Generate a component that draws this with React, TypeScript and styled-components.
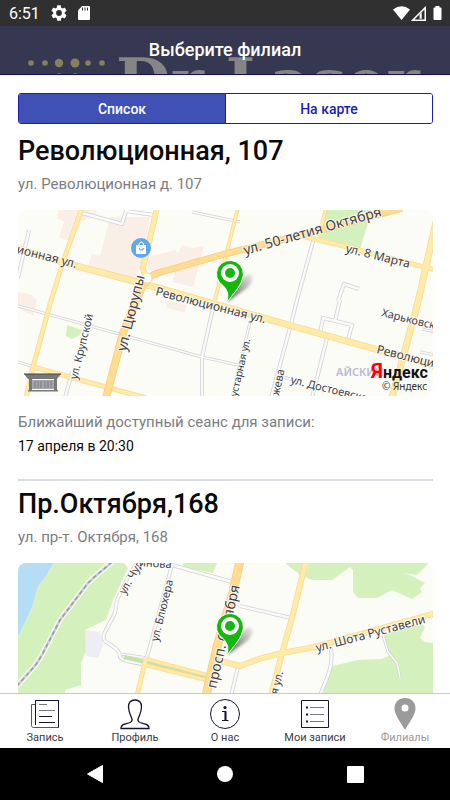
import React, { useState } from "react";
import styled, { createGlobalStyle } from "styled-components";

const GlobalStyle = createGlobalStyle`
  *, *::before, *::after { box-sizing: border-box; }
  body { margin: 0; background: #fff; }
  body, button { font-family: Roboto, "Liberation Sans", sans-serif; }
`;

const Screen = styled.div`
  display: flex;
  flex-direction: column;
  height: 100vh;
  background: #fff;
  color: #0a0a0a;
`;

const StatusBar = styled.div`
  flex: none;
  display: flex;
  align-items: center;
  justify-content: space-between;
  height: 26px;
  padding: 0 8px 0 9px;
  background: #303030;
  color: #fff;
  font-size: 16px;
`;

const StatusGroup = styled.div<{ $gap: number }>`
  display: flex;
  align-items: center;
  gap: ${(p) => p.$gap}px;
  svg { display: block; }
`;

const Header = styled.header`
  position: relative;
  flex: none;
  display: flex;
  align-items: center;
  justify-content: center;
  height: 49px;
  overflow: hidden;
  background: #353850;
  border-bottom: 1px solid #10106a;
`;

const HeaderArt = styled.svg`
  position: absolute;
  inset: 0;
  width: 100%;
  height: 49px;
`;

const Title = styled.h1`
  position: relative;
  margin: 0;
  color: #fff;
  font-size: 18px;
  line-height: 24px;
  font-weight: 500;
`;

const Main = styled.main`
  flex: 1;
  min-height: 0;
  overflow: hidden;
  padding: 18px 17px 0 18px;
`;

const Segments = styled.div`
  display: flex;
  height: 31px;
  margin-bottom: 4px;
  border: 1px solid #1a1fb0;
  border-radius: 3px;
  overflow: hidden;
`;

const Segment = styled.button<{ $active: boolean }>`
  flex: 1;
  border: 0;
  padding: 0;
  font-size: 14px;
  font-weight: 500;
  color: ${(p) => (p.$active ? "#fff" : "#1a1fb0")};
  background: ${(p) => (p.$active ? "#3f51b5" : "#fff")};
  & + & { border-left: 1px solid #1a1fb0; }
`;

const Branch = styled.article`
  & + & {
    margin-top: 21px;
    border-top: 2px solid #dadbe0;
  }
`;

const BranchName = styled.h2`
  margin: 0;
  padding-top: 8px;
  font-size: 27px;
  line-height: 30px;
  font-weight: 500;
  white-space: nowrap;
`;

const Muted = styled.p`
  margin: 0;
  color: #7c7c82;
  font-size: 15px;
  line-height: 20px;
`;

const Address = styled(Muted)`
  margin-top: 8px;
`;

const MapFrame = styled.svg`
  display: block;
  width: 100%;
  height: 186px;
  margin: 16px 0;
  border-radius: 8px;
  background: #fbfcf6;
  font-family: "Noto Sans", sans-serif;
`;

const SessionTime = styled.p`
  margin: 2px 0 0;
  font-size: 14px;
  line-height: 24px;
`;

const Tabs = styled.nav`
  flex: none;
  display: grid;
  grid-template-columns: repeat(5, 1fr);
  height: 55px;
  border-top: 1px solid #c9c9c9;
  background: #fff;
`;

const Tab = styled.button<{ $active: boolean }>`
  display: flex;
  flex-direction: column;
  align-items: center;
  gap: 1px;
  padding: 4px 0 0;
  border: 0;
  background: none;
  font-size: 11px;
  line-height: 14px;
  white-space: nowrap;
  color: ${(p) => (p.$active ? "#9a9a9a" : "#3c3c44")};
  svg { display: block; }
`;

const SystemNav = styled.div`
  flex: none;
  display: flex;
  justify-content: center;
  gap: 98px;
  height: 52px;
  background: #000;
`;

const SystemButton = styled.button`
  display: flex;
  align-items: center;
  justify-content: center;
  width: 32px;
  padding: 0;
  border: 0;
  background: none;
`;

type Label = { x: number; y: number; a: number; s: number; t: string };
type Road = { d: string; w: number; c: string; e: string };

const MapLabels = ({ items }: { items: Label[] }) => (
  <g fill="#404048" stroke="#fff" strokeWidth="2" strokeOpacity="0.75" strokeLinejoin="round" paintOrder="stroke">
    {items.map((l) => (
      <text key={l.t} fontSize={l.s} transform={`translate(${l.x} ${l.y}) rotate(${l.a})`}>
        {l.t}
      </text>
    ))}
  </g>
);

const Roads = ({ items }: { items: Road[] }) => (
  <g fill="none" strokeLinejoin="round">
    {items.map((r) => (
      <path key={"e" + r.d} d={r.d} stroke={r.e} strokeWidth={r.w} />
    ))}
    {items.map((r) => (
      <path key={"f" + r.d} d={r.d} stroke={r.c} strokeWidth={r.w - 1.6} />
    ))}
  </g>
);

const grey = (d: string, w = 4): Road => ({ d, w, c: "#fafafa", e: "#d2d2d5" });
const yellow = (d: string, w = 6): Road => ({ d, w, c: "#ffeba8", e: "#fbd993" });
const orange = (d: string, w = 8): Road => ({ d, w, c: "#ffdc92", e: "#fbce80" });

const Pin = ({ id }: { id: string }) => (
  <g>
    <defs>
      <linearGradient id={id} x1="0" y1="1" x2="1" y2="0">
        <stop offset="0" stopColor="#222" stopOpacity="0.85" />
        <stop offset="1" stopColor="#555" stopOpacity="0.1" />
      </linearGradient>
      <filter id={id + "s"} x="-30%" y="-30%" width="160%" height="160%">
        <feGaussianBlur stdDeviation="1.5" />
      </filter>
    </defs>
    <path d="M227 302L238 282Q246 273 251 275Q256 279 247 288Z" fill={`url(#${id})`} filter={`url(#${id}s)`} />
    <path
      d="M226.500 303C229 295 228 291 223 285.500A13.500 13.500 0 1 1 242 280C240 287 233 294 226.500 303Z"
      fill="#14b80c"
      stroke="#fff"
      strokeWidth="1"
    />
    <circle cx="230" cy="273" r="9" fill="#fff" />
    <circle cx="230" cy="273" r="5" fill="#14b80c" />
  </g>
);

const FirstMap = () => (
  <MapFrame viewBox="18 210 415 186" preserveAspectRatio="xMidYMid slice" role="img" aria-label="Карта: Революционная, 107">
    <g fill="#faefe6">
      <path d="M58 210H97L95 217L82 221L72 242L59 237L64 222L57 218Z" />
      <path d="M110 217L150 217L143 263L135 280L88 265L92 254L100 256Z" />
      <path d="M148 257L175 250L178 253L182 245L192 248L204 246L193 287L173 282L175 270L148 270Z" />
      <path d="M18 292L30 294L37 300L33 316L18 308Z" />
      <path d="M165 300L187 305L185 313L167 308Z" />
    </g>
    <g fill="#d4f1bd">
      <path d="M325 210H372L360 249L318 237Z" />
      <path d="M67 325L82 330L80 335L72 339L66 336Z" />
    </g>
    <Roads
      items={[
        grey("M314 238L297 300L290 328L271 398"),
        grey("M327 338L312 398"),
        grey("M320 333L323 318L352 325L348 340"),
        grey("M340 300L335 321"),
        grey("M338 301L344 284L359 289"),
        grey("M18 306L202 357L238 365", 3),
        grey("M213 308L202 357V398"),
        grey("M18 362L34 367", 3),
        grey("M72 372L65 398"),
        grey("M250 322L232 398", 3),
        grey("M280 376L300 382", 3),
        grey("M29 230L18 278"),
        grey("M82 213L122 224L126 211L154 215"),
        grey("M192 212L240 222", 3),
        grey("M436 355L420 352", 3),
        grey("M436 332L422 329", 3),
      ]}
    />
    <Roads
      items={[
        yellow("M82 208L63 262L50 304L33 367L26 398", 5),
        yellow("M33 367L146 398", 5),
        yellow("M238 208L226 255L215 300", 4),
        yellow("M326 208L319 236", 4),
        yellow("M302 236L348 247L412 264L436 270", 5),
        yellow("M436 222L418 302L392 398", 7),
        yellow("M157 208L143 268L146 282", 6),
        yellow("M14 248L73 265L137 282L225 307L292 326L375 349L436 366", 7),
      ]}
    />
    <Roads
      items={[
        orange("M145 285C148 274 158 273 165 271L225 254L325 229L402 208", 7),
        orange("M143 284L123 333L106 398", 8),
      ]}
    />
    <circle cx="147" cy="278" r="5" fill="#fff" stroke="#fbd993" />
    <circle cx="141" cy="248" r="10" fill="#5ea8ef" />
    <path d="M136 245H146V254H136Z" fill="#fff" />
    <path d="M139 246V243.500Q141 240.500 143.500 243.500V246" fill="none" stroke="#fff" />
    <path d="M139 248Q141 252 144 248" fill="none" stroke="#5ea8ef" strokeWidth="1.200" />
    <text x="336" y="376" fontSize="11" fontWeight="600" fill="#b9b9dc">АЙСКИЙ</text>
    <MapLabels
      items={[
        { x: 16, y: 253, a: 14, s: 12, t: "ионная ул." },
        { x: 155, y: 295, a: 14.5, s: 12, t: "Революционная ул." },
        { x: 245, y: 255, a: -16, s: 14, t: "ул. 50-летия Октября" },
        { x: 345, y: 252, a: 14, s: 12, t: "ул. 8 Марта" },
        { x: 126, y: 352, a: -76, s: 14, t: "ул. Цюрупы" },
        { x: 77, y: 380, a: -76, s: 11, t: "ул. Крупской" },
        { x: 237, y: 397, a: -77, s: 10, t: "устарная ул." },
        { x: 279, y: 396, a: -78, s: 11, t: "жева" },
        { x: 290, y: 383, a: 14, s: 11, t: "ул. Достоевского" },
        { x: 381, y: 316, a: 14, s: 11, t: "Харьковская ул." },
        { x: 376, y: 353, a: 14, s: 12, t: "Революционная" },
      ]}
    />
    <g fill="#77787a">
      <path d="M24 374H61L57 379H28Z" />
      <path d="M30 380H56V389H30Z" fill="#a5a6a8" />
      <path d="M29 379H32V390H29ZM54 379H57V390H54ZM28 390H58V391.500H28Z" />
      <path d="M35 381V388M38 381V388M41 381V388M45 381V388M48 381V388M51 381V388" stroke="#77787a" />
      <path d="M24 374H61" stroke="#444" />
    </g>
    <text x="371" y="378" fontSize="16" fontWeight="700" fontFamily="Roboto, sans-serif" fill="#111">
      <tspan fontSize="20" fill="#f00">Я</tspan>ндекс
    </text>
    <text x="382" y="390" fontSize="10" fill="#333">© Яндекс</text>
    <Pin id="shadeA" />
  </MapFrame>
);

const SecondMap = () => (
  <MapFrame viewBox="18 563 415 186" preserveAspectRatio="xMidYMid slice" role="img" aria-label="Карта: Пр. Октября, 168">
    <path d="M18 563H54L48 573L38 587L32 608L18 637Z" fill="#b5ddf5" />
    <g fill="#d4f1bd">
      <path d="M54 563H124L128 568L113 600L106 620L85 630L88 647L81 663V685L65 690L60 750H18V637L32 608L38 587L48 573Z" />
      <path d="M183 563H217L213 573L183 567Z" />
      <path d="M285 563H304L300 575Z" />
      <path d="M309 563H392V570L410 575L425 583L420 588L422 592L412 599L392 590L377 598L358 598L353 592V570L350 567L332 580H312L305 577Z" />
      <path d="M392 563H429L417 575L392 572Z" />
      <path d="M420 623L425 627L420 638L425 642L433 643V750H300L324 692L328 675L333 666L358 660L382 659L390 655L383 635Z" />
    </g>
    <path d="M85 630L100 632L103 645L98 658L86 656Z" fill="#eeecf4" />
    <path d="M112 562C104 569 96 575 88 583L60 620L43 653C39 660 36 665 33 668L17 686" fill="none" stroke="#fff" strokeWidth="5" />
    <path d="M112 562C104 569 96 575 88 583L60 620L43 653C39 660 36 665 33 668L17 686" fill="none" stroke="#d0d0d4" strokeWidth="3" />
    <path d="M112 562C104 569 96 575 88 583L60 620L43 653C39 660 36 665 33 668L17 686" fill="none" stroke="#9a9a9e" strokeWidth="1.500" strokeDasharray="4 3" />
    <Roads
      items={[
        grey("M138 561L128 577L117 600L115 613L105 632Q101 640 108 643L115 648Q120 652 120 657Q122 661 143 664"),
        grey("M121 654L147 658", 3),
        grey("M172 565L147 657"),
        grey("M140 561L172 565L225 580L236 583"),
        grey("M240 606L291 618"),
        grey("M331 648Q333 664 327 678L318 700"),
        grey("M383 635L388 652L397 663L400 677", 3),
        grey("M238 667L230 700"),
      ]}
    />
    <path d="M124 657L207 677" stroke="#c5e2a5" strokeWidth="4" />
    <Roads
      items={[
        yellow("M146 659L207 675", 4),
        yellow("M145 665L206 680", 4),
        yellow("M146 658L136 700", 5),
        yellow("M306 561L292 618L282 653L270 700", 6),
        yellow("M215 660L225 662L240 666L262 658L282 653L315 647L436 613", 6),
      ]}
    />
    <Roads items={[orange("M240 561L233 592L217 647L205 700", 9)]} />
    <MapLabels
      items={[
        { x: 125, y: 595, a: -60, s: 11, t: "ул. Чуд" },
        { x: 139, y: 566, a: 4, s: 11, t: "инова" },
        { x: 158, y: 642, a: -76, s: 11, t: "ул. Блюхера" },
        { x: 216, y: 689, a: -77, s: 14, t: "просп. Октября" },
        { x: 317, y: 652, a: -15, s: 12, t: "ул. Шота Руставели" },
        { x: 276, y: 701, a: -76, s: 11, t: "ая ул." },
      ]}
    />
    <g transform="translate(0 353)">
      <Pin id="shadeB" />
    </g>
  </MapFrame>
);

const dark = "#15152e";

const NewsIcon = () => (
  <svg width="32" height="32" viewBox="0 0 32 32" fill="none" stroke={dark}>
    <path d="M6.500 2.500H29.500V29.500H4.500Q2.500 29.500 2.500 27.500V6.500H6.500" stroke="#55555f" />
    <path d="M6.500 27V2.500H29.500V29.500" />
    <path d="M10 6.500H18M10 12.500H26" stroke="#77777f" />
    <path d="M10 18.500H23M10 24.500H26" />
  </svg>
);

const ProfileIcon = () => (
  <svg width="32" height="32" viewBox="0 0 32 32" fill="none" stroke={dark} strokeWidth="1.300">
    <path d="M2 30.500Q2 27 6 26L11 24.500Q13.500 23.500 13 21L11 16Q10 14 9.500 9Q9.500 2 16 2Q22.500 2 22.500 9Q22 14 21 16L19 21Q18.500 23.500 21 24.500L26 26Q30 27 30 30.500Z" />
  </svg>
);

const InfoIcon = () => (
  <svg width="32" height="32" viewBox="0 0 32 32" fill="none" stroke={dark}>
    <circle cx="16" cy="16" r="14.500" />
    <circle cx="16" cy="9.500" r="1.600" fill={dark} stroke="none" />
    <path d="M13 13.500H16.500V22.500M13 22.500H19.500" strokeWidth="1.200" />
    <path d="M16.500 13.500V22.500" strokeWidth="2" />
  </svg>
);

const ListIcon = () => (
  <svg width="32" height="32" viewBox="0 0 32 32" fill="none" stroke={dark}>
    <path d="M2.500 2.500H29.500V29.500H2.500Z" />
    <path d="M11 9.500H25M11 16.500H25M11 23.500H25" stroke="#77777f" />
    <path d="M7 9.500H9M7 16.500H9M7 23.500H9" strokeWidth="2" />
  </svg>
);

const PlaceIcon = () => (
  <svg width="32" height="32" viewBox="0 0 32 32">
    <path
      fillRule="evenodd"
      fill="#9b9b9b"
      d="M16 0C9.500 0 5.500 4.500 5.500 10.500C5.500 17 12 25 16 32C20 25 26.500 17 26.500 10.500C26.500 4.500 22.500 0 16 0ZM16 6.500A3.500 3.500 0 1 1 16 13.500A3.500 3.500 0 1 1 16 6.500Z"
    />
  </svg>
);

const tabs = [
  { label: "Запись", Icon: NewsIcon },
  { label: "Профиль", Icon: ProfileIcon },
  { label: "О нас", Icon: InfoIcon },
  { label: "Мои записи", Icon: ListIcon },
  { label: "Филиалы", Icon: PlaceIcon },
];

export default function App() {
  const [view, setView] = useState("Список");
  const [tab, setTab] = useState("Филиалы");

  return (
    <Screen>
      <GlobalStyle />
      <StatusBar>
        <StatusGroup $gap={11}>
          <span>6:51</span>
          <svg width="16" height="16" viewBox="2 2 20 20" fill="#fff">
            <path d="M19.140 12.940c.04-.3.06-.61.06-.94s-.02-.64-.07-.94l2.030-1.580a.49.49 0 0 0 .12-.61l-1.920-3.320a.49.49 0 0 0-.59-.22l-2.390.96a7 7 0 0 0-1.620-.94l-.36-2.540a.48.48 0 0 0-.48-.41h-3.840a.48.48 0 0 0-.47.41l-.36 2.540c-.59.24-1.130.57-1.620.94l-2.390-.96a.48.48 0 0 0-.59.22L2.740 8.870a.48.48 0 0 0 .12.61l2.030 1.580c-.05.3-.09.63-.09.94s.02.64.07.94l-2.030 1.580a.49.49 0 0 0-.12.61l1.920 3.320c.12.22.37.29.59.22l2.390-.96c.5.38 1.030.7 1.620.94l.36 2.540c.05.24.24.41.48.41h3.840c.24 0 .44-.17.47-.41l.36-2.540c.59-.24 1.130-.56 1.620-.94l2.390.96c.22.08.47 0 .59-.22l1.920-3.320a.48.48 0 0 0-.12-.61zM12 15.600A3.600 3.600 0 1 1 12 8.400a3.600 3.600 0 0 1 0 7.200z" />
          </svg>
          <svg width="12" height="14" viewBox="0 0 12 14">
            <path d="M4 0H11Q12 0 12 1V13Q12 14 11 14H1Q0 14 0 13V4.500Z" fill="#fff" />
            <path d="M4.500 1.500V4.500M7 1.500V4.500M9.500 1.500V4.500" stroke="#303030" />
          </svg>
        </StatusGroup>
        <StatusGroup $gap={1}>
          <svg width="17" height="14" viewBox="0 0 17 14">
            <path d="M0 3.500Q8.500 -3 17 3.500L8.500 14Z" fill="#fff" />
          </svg>
          <svg width="15" height="15" viewBox="0 0 14 14" fill="none" stroke="#fff">
            <path d="M1.500 13.300L13.300 1.500V13.300Z" strokeWidth="1.400" />
            <path d="M8 8L10 6V12H8Z" fill="#fff" stroke="none" />
          </svg>
          <svg width="15" height="14" viewBox="0 0 15 14">
            <path d="M8.500 0H12.500V1.500H13.500Q14.500 1.500 14.500 2.500V13Q14.500 14 13.500 14H7.500Q6.500 14 6.500 13V2.500Q6.500 1.500 7.500 1.500H8.500Z" fill="#fff" />
          </svg>
        </StatusGroup>
      </StatusBar>
      <Header>
        <HeaderArt viewBox="0 0 450 49" preserveAspectRatio="xMidYMid slice" aria-hidden="true">
          <g fill="#87805f">
            <circle cx="31" cy="37" r="2.800" />
            <circle cx="45" cy="37" r="2.800" />
            <circle cx="59" cy="37" r="4.200" />
            <circle cx="75" cy="37" r="4.500" />
            <circle cx="88" cy="37" r="2.800" />
            <circle cx="102" cy="37" r="2.800" />
            <circle cx="59" cy="50" r="2.800" />
            <circle cx="75" cy="50" r="2.800" />
          </g>
          <text x="116" y="78" fontSize="63" fontWeight="700" fontFamily="DejaVu Serif, serif" fill="#858586">
            Dr Laser
          </text>
        </HeaderArt>
        <Title>Выберите филиал</Title>
      </Header>
      <Main>
        <Segments>
          {["Список", "На карте"].map((name) => (
            <Segment key={name} $active={view === name} aria-pressed={view === name} onClick={() => setView(name)}>
              {name}
            </Segment>
          ))}
        </Segments>
        <Branch>
          <BranchName>Революционная, 107</BranchName>
          <Address>ул. Революционная д. 107</Address>
          <FirstMap />
          <Muted>Ближайший доступный сеанс для записи:</Muted>
          <SessionTime>17 апреля в 20:30</SessionTime>
        </Branch>
        <Branch>
          <BranchName>Пр.Октября,168</BranchName>
          <Address>ул. пр-т. Октября, 168</Address>
          <SecondMap />
        </Branch>
      </Main>
      <Tabs>
        {tabs.map(({ label, Icon }) => (
          <Tab key={label} $active={tab === label} onClick={() => setTab(label)}>
            <Icon />
            {label}
          </Tab>
        ))}
      </Tabs>
      <SystemNav>
        <SystemButton aria-label="Назад">
          <svg width="18" height="18" viewBox="0 0 18 18">
            <path d="M1.500 9L16.500 0.500V17.500Z" fill="#fff" stroke="#fff" strokeLinejoin="round" />
          </svg>
        </SystemButton>
        <SystemButton aria-label="Домой">
          <svg width="16" height="16" viewBox="0 0 16 16">
            <circle cx="8" cy="8" r="8" fill="#fff" />
          </svg>
        </SystemButton>
        <SystemButton aria-label="Недавние">
          <svg width="17" height="17" viewBox="0 0 17 17">
            <rect width="17" height="17" rx="1" fill="#fff" />
          </svg>
        </SystemButton>
      </SystemNav>
    </Screen>
  );
}
